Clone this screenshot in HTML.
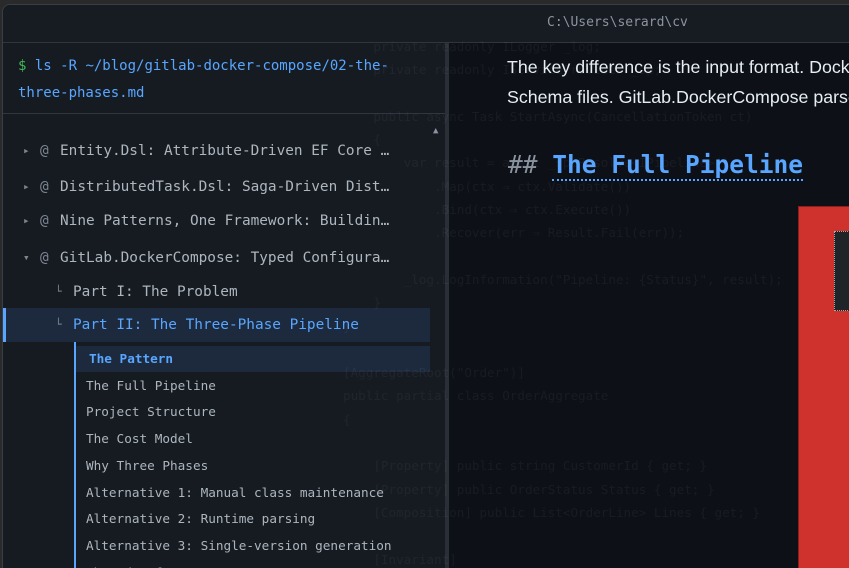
<!DOCTYPE html>
<html><head><meta charset="utf-8"><style>
*{margin:0;padding:0;box-sizing:border-box}
html,body{width:849px;height:568px;overflow:hidden}
body{background:#2a2a2a;position:relative;font-family:"DejaVu Sans Mono",monospace}
.win{position:absolute;left:2px;top:4px;width:847px;height:564px;background:#0d1117;border-top-left-radius:8px;border:1px solid #3a3f46;border-right:none;border-bottom:none;overflow:hidden}
.title{position:absolute;left:0;top:0;right:0;height:38px;background:#171b22;border-bottom:1px solid #30363d}
.title span{position:absolute;left:544px;top:10px;font-size:13px;color:#8b949e}
.panel{position:absolute;left:0;top:38px;width:442px;height:526px;background:#161b22;overflow:hidden}
.sb{position:absolute;left:442px;top:38px;width:4px;height:526px;background:#2a2f37}
.hdr{position:absolute;left:0;top:0;width:442px;height:71px;border-bottom:1px solid #30363d;font-size:14px;line-height:27px;padding:10px 0 0 15px;color:#58a6ff}
.hdr b{color:#3fb950;font-weight:normal}
.row{position:absolute;left:0;font-size:14.4px;color:#adb5bd;white-space:nowrap;height:20px;line-height:20px}
.row i{font-style:normal;color:#7d8590;font-size:11px;position:absolute;left:20px}
.row s{text-decoration:none;color:#7d8590;position:absolute;left:37px}
.row em{font-style:normal;position:absolute;left:57px}
.sel{position:absolute;left:0;top:265px;width:427px;height:34px;background:#1d2a3d;border-left:3px solid #58a6ff}
.sub{position:absolute;left:71px;top:299px;width:2px;height:240px;background:#58a6ff}
.pat{position:absolute;left:73px;top:303px;width:354px;height:26px;background:#1d2a3d}
.it{position:absolute;left:83px;font-size:12.7px;color:#adb5bd;white-space:nowrap;line-height:16px}
.code{position:absolute;left:340px;top:30px;height:534px;overflow:hidden;font-size:12.6px;line-height:23.3px;color:rgba(200,210,220,0.06);white-space:pre}
.txt{position:absolute;left:504px;top:47px;font-family:"Liberation Sans",sans-serif;font-size:17.8px;line-height:30px;color:#e6edf3;white-space:nowrap}
.h2{position:absolute;left:505px;top:145px;font-size:24.5px;font-weight:bold;white-space:nowrap}
.h2 .m{color:#8b949e;font-weight:normal}
.h2 .t{color:#58a6ff;border-bottom:2px dotted #58a6ff}
.red{position:absolute;left:795px;top:201px;width:60px;height:370px;background:#cf312c;border-left:1px solid #8a201c;border-top:1px solid #8a201c}
.inner{position:absolute;left:35px;top:24px;width:30px;height:80px;background:#1f2428;border:1px dotted #aaa}
</style></head><body>
<div class="win">
<div class="title"><span>C:\Users\serard\cv</span></div>
<div class="panel">
<div class="hdr"><b>$</b> ls -R ~/blog/gitlab-docker-compose/02-the-<br>three-phases.md</div>
<div class="row" style="top:98px"><i>▸</i><s>@</s><em>Entity.Dsl: Attribute-Driven EF Core …</em></div>
<div class="row" style="top:134px"><i>▸</i><s>@</s><em>DistributedTask.Dsl: Saga-Driven Dist…</em></div>
<div class="row" style="top:168px"><i>▸</i><s>@</s><em>Nine Patterns, One Framework: Buildin…</em></div>
<div class="row" style="top:205px"><i>▾</i><s>@</s><em>GitLab.DockerCompose: Typed Configura…</em></div>
<div class="row" style="top:239px"><s style="left:52px;font-size:11px">└</s><em style="left:70px">Part I: The Problem</em></div>
<div class="sel"></div>
<div class="row" style="top:272px;color:#58a6ff"><s style="left:52px;font-size:11px">└</s><em style="left:70px">Part II: The Three-Phase Pipeline</em></div>
<div class="sub"></div><div class="pat"></div>
<div class="it" style="top:308px;left:86px;color:#58a6ff;font-weight:bold">The Pattern</div>
<div class="it" style="top:335px">The Full Pipeline</div>
<div class="it" style="top:361px">Project Structure</div>
<div class="it" style="top:388px">The Cost Model</div>
<div class="it" style="top:415px">Why Three Phases</div>
<div class="it" style="top:442px">Alternative 1: Manual class maintenance</div>
<div class="it" style="top:468px">Alternative 2: Runtime parsing</div>
<div class="it" style="top:495px">Alternative 3: Single-version generation</div>
<div class="it" style="top:522px">Shared Infrastructure</div>
<div style="position:absolute;left:430px;top:83px;font-size:9px;color:#8b949e">▲</div>
</div>
<div class="sb"></div>
<div class="code">    private readonly ILogger _log;
    private readonly IServiceProvider _sp;

    public async Task StartAsync(CancellationToken ct)
    {
        var result = await _sp.Resolve&lt;IPipeline&gt;()
            .Map(ctx ⇒ ctx.Validate())
            .Bind(ctx ⇒ ctx.Execute())
            .Recover(err ⇒ Result.Fail(err));

        _log.LogInformation("Pipeline: {Status}", result);
    }
}

[AggregateRoot("Order")]
public partial class OrderAggregate
{

    [Property] public string CustomerId { get; }
    [Property] public OrderStatus Status { get; }
    [Composition] public List&lt;OrderLine&gt; Lines { get; }

    [Invariant]
    public bool MustHaveLines() ⇒ Lines.Count &gt; 0;</div>
<div class="txt">The key difference is the input format. DockerCompose.Dsl parses<br>Schema files. GitLab.DockerCompose parses the GitLab CI schema</div>
<div class="h2"><span class="m">##</span>&nbsp;<span class="t">The Full Pipeline</span></div>
<div class="red"><div class="inner"></div></div>
</div>
</body></html>
